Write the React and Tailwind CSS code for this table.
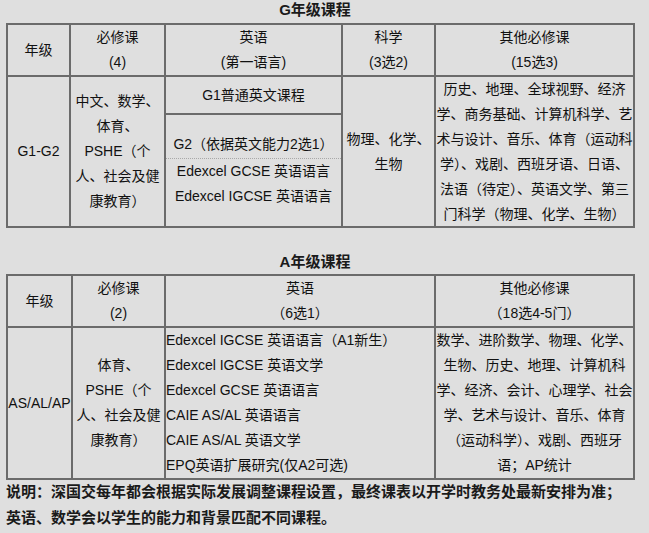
const font = "font-['Liberation_Sans','Noto_Sans_CJK_SC',sans-serif]"

function Lines({lines, className = ""}) {
    return (
        <div className={className}>
            {lines.map((l) => (
                <div key={l} className="whitespace-nowrap">
                    {l}
                </div>
            ))}
        </div>
    )
}

function Cell({children, className = ""}) {
    return (
        <div className={`bg-[#dfdfdf] flex flex-col items-center justify-center text-center ${className}`}>
            {children}
        </div>
    )
}

function Title({children, className = ""}) {
    return (
        <div className={`w-[629px] pr-[11px] text-center text-[15px] leading-[20px] font-bold text-[#1a1a1a] ${className}`}>
            {children}
        </div>
    )
}

function GradeTable() {
    return (
        <div className="grid grid-cols-[61px_93px_175px_91px_197px] grid-rows-[50px_149px] gap-[2px] p-[2px] bg-[#6b6b6b] w-[629px]">
            <Cell>年级</Cell>
            <Cell>
                <Lines lines={["必修课", "(4)"]} />
            </Cell>
            <Cell>
                <Lines lines={["英语", "(第一语言)"]} />
            </Cell>
            <Cell>
                <Lines lines={["科学", "(3选2)"]} />
            </Cell>
            <Cell>
                <Lines lines={["其他必修课", "(15选3)"]} />
            </Cell>

            <Cell>G1-G2</Cell>
            <Cell>
                <Lines lines={["中文、数学、", "体育、", "PSHE（个", "人、社会及健", "康教育）"]} />
            </Cell>
            <div className="flex flex-col gap-[2px]">
                <Cell className="h-[36px] shrink-0">G1普通英文课程</Cell>
                <Cell className="flex-1">
                    <div className="w-full">
                        <div className="whitespace-nowrap border-b border-dotted border-[#a8a8a8] pb-[1px]">
                            G2（依据英文能力2选1）
                        </div>
                        <Lines lines={["Edexcel GCSE 英语语言", "Edexcel IGCSE 英语语言"]} />
                    </div>
                </Cell>
            </div>
            <Cell>
                <Lines lines={["物理、化学、", "生物"]} />
            </Cell>
            <Cell>
                <Lines
                    lines={[
                        "历史、地理、全球视野、经济",
                        "学、商务基础、计算机科学、艺",
                        "术与设计、音乐、体育（运动科",
                        "学）、戏剧、西班牙语、日语、",
                        "法语（待定）、英语文学、第三",
                        "门科学（物理、化学、生物）",
                    ]}
                />
            </Cell>
        </div>
    )
}

function ALevelTable() {
    return (
        <div className="grid grid-cols-[63px_91px_268px_197px] grid-rows-[50px_150px] gap-[2px] p-[2px] bg-[#6b6b6b] w-[629px]">
            <Cell>年级</Cell>
            <Cell>
                <Lines lines={["必修课", "(2)"]} />
            </Cell>
            <Cell>
                <Lines lines={["英语", "（6选1）"]} />
            </Cell>
            <Cell>
                <Lines lines={["其他必修课", "（18选4-5门）"]} />
            </Cell>

            <Cell>
                <span className="whitespace-nowrap">AS/AL/AP</span>
            </Cell>
            <Cell>
                <Lines lines={["体育、", "PSHE（个", "人、社会及健", "康教育）"]} />
            </Cell>
            <Cell className="!items-start !text-left">
                <Lines
                    lines={[
                        "Edexcel IGCSE 英语语言（A1新生）",
                        "Edexcel IGCSE 英语文学",
                        "Edexcel GCSE 英语语言",
                        "CAIE AS/AL 英语语言",
                        "CAIE AS/AL 英语文学",
                        "EPQ英语扩展研究(仅A2可选)",
                    ]}
                />
            </Cell>
            <Cell>
                <Lines
                    lines={[
                        "数学、进阶数学、物理、化学、",
                        "生物、历史、地理、计算机科",
                        "学、经济、会计、心理学、社会",
                        "学、艺术与设计、音乐、体育",
                        "（运动科学）、戏剧、西班牙",
                        "语；AP统计",
                    ]}
                />
            </Cell>
        </div>
    )
}

export default function App() {
    return (
        <div className={`${font} bg-[#dfdfdf] min-h-screen w-full text-[14px] leading-[25px] text-[#111] pl-[6px]`}>
            <Title className="mb-[3px]">G年级课程</Title>
            <GradeTable />
            <Title className="mt-[24px] mb-[2px]">A年级课程</Title>
            <ALevelTable />
            <div className="text-[15px] leading-[26px] font-bold text-[#1a1a1a] -mt-[1px]">
                <div className="whitespace-nowrap">
                    说明：深国交每年都会根据实际发展调整课程设置，最终课表以开学时教务处最新安排为准；
                </div>
                <div className="whitespace-nowrap">英语、数学会以学生的能力和背景匹配不同课程。</div>
            </div>
        </div>
    )
}
